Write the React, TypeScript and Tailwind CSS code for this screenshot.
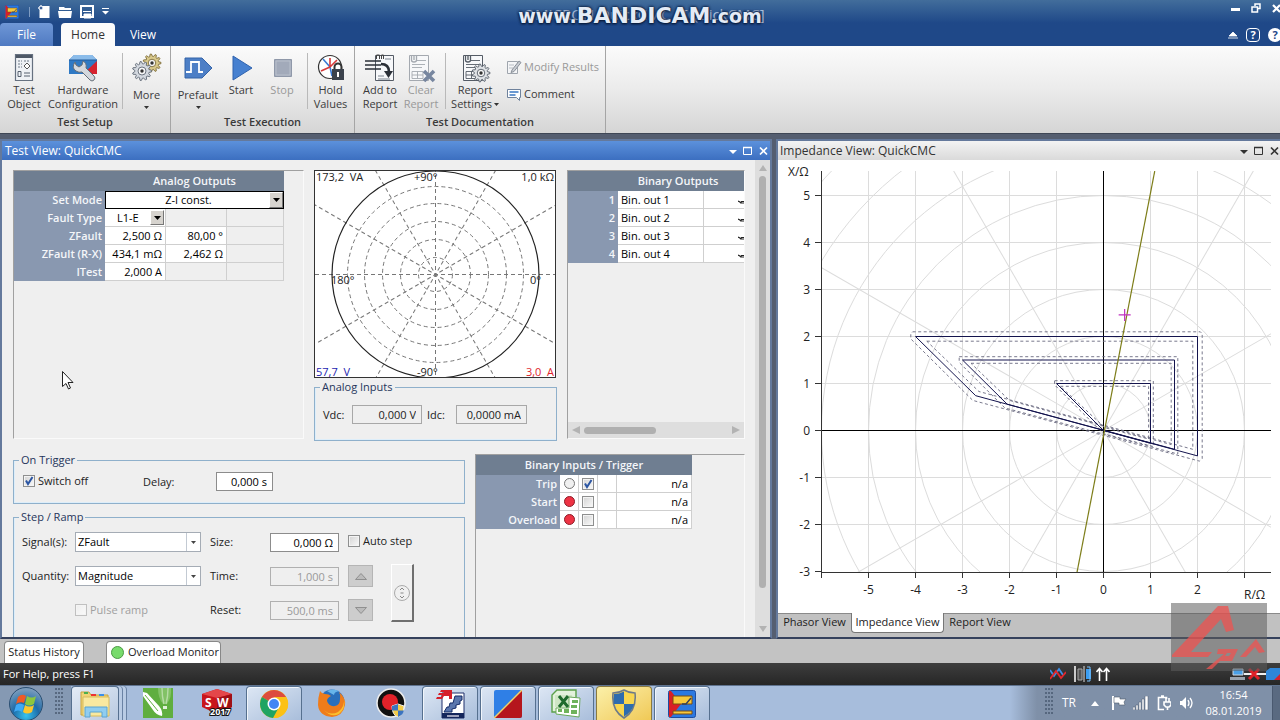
import React from 'react';

const BASE_FONT = "font-['Open_Sans','Noto_Sans',sans-serif]";

/* ---------- Small controls ---------- */

interface CheckProps {
    id: string;
    checked?: boolean;
    disabled?: boolean;
    label?: string;
    ariaLabel?: string;
}

const Check: React.FC<CheckProps> = ({ id, checked = false, disabled = false, label, ariaLabel }) => (
    <span className="inline-flex items-center gap-[3px]">
        <span className="relative inline-flex h-3 w-3">
            <input
                id={id}
                type="checkbox"
                defaultChecked={checked}
                disabled={disabled}
                aria-label={ariaLabel}
                className="peer h-3 w-3 appearance-none border border-[#8e8f8f] bg-gradient-to-br from-[#d3d3d3] to-[#fafafa] shadow-[inset_0_0_0_1px_#f4f4f4] disabled:border-[#c0c0c0] disabled:from-[#eeeeee]"
            />
            <svg viewBox="0 0 12 12" className="pointer-events-none absolute inset-0 hidden h-3 w-3 peer-checked:block" fill="none" stroke="#2c56a3" strokeWidth="2">
                <path d="M3 5.5 L5 9 L9.5 2" />
            </svg>
        </span>
        {label && (
            <label htmlFor={id} className={disabled ? 'text-[#a0a0a0]' : 'text-[#222]'}>
                {label}
            </label>
        )}
    </span>
);

interface ComboProps {
    id: string;
    value: string;
}

const Combo: React.FC<ComboProps> = ({ id, value }) => (
    <span className="relative block h-5 w-[126px]">
        <select id={id} className="h-5 w-full appearance-none border border-[#a5acb5] bg-white px-0.5 text-[11px] leading-4 text-black">
            <option>{value}</option>
        </select>
        <span className="pointer-events-none absolute inset-y-px right-px flex w-[14px] items-center justify-center border-l border-[#c3cad3]">
            <svg width="5" height="3" viewBox="0 0 5 3"><path d="M0 0h5L2.5 3z" fill="#444" /></svg>
        </span>
    </span>
);

const DropArrow: React.FC = () => (
    <span className="pointer-events-none absolute right-px top-px bottom-px flex w-[14px] items-center justify-center border border-[#777] border-t-white border-l-white bg-[#d6d3ce]">
        <svg width="7" height="4" viewBox="0 0 7 4"><path d="M0 0h7L3.5 4z" fill="#000" /></svg>
    </span>
);

interface FieldProps {
    label: string;
    value: string;
    className: string;
    disabled?: boolean;
    readOnly?: boolean;
}

const Field: React.FC<FieldProps> = ({ label, value, className, disabled, readOnly }) => (
    <input
        type="text"
        aria-label={label}
        defaultValue={value}
        disabled={disabled}
        readOnly={readOnly}
        className={`h-[19px] border px-[5px] text-right text-[11px] leading-4 disabled:border-[#b0b0b0] disabled:bg-[#efefef] disabled:text-[#9a9a9a] ${className}`}
    />
);

const WindowButtons: React.FC<{ color: string }> = ({ color }) => (
    <div className="flex items-center gap-1.5">
        <button type="button" aria-label="Window options" className="flex h-3 w-2 items-center">
            <svg width="8" height="10" viewBox="0 0 8 10"><path d="M0 4h8L4 8z" fill={color} /></svg>
        </button>
        <button type="button" aria-label="Maximize" className="flex h-3 w-2.5 items-center">
            <svg width="10" height="10" viewBox="0 0 10 10"><path d="M.5 1.500h8v7h-8z" fill="none" stroke={color} /><path d="M0 1.500h9" stroke={color} strokeWidth="1.500" /></svg>
        </button>
        <button type="button" aria-label="Close" className="flex h-3 w-2.5 items-center">
            <svg width="9" height="10" viewBox="0 0 9 10"><path d="M1 1.500l7 7M8 1.500l-7 7" stroke={color} strokeWidth="1.700" /></svg>
        </button>
    </div>
);

/* ---------- Ribbon icons ---------- */

const gearPath = (cx: number, cy: number, outer: number, inner: number, teeth: number) => {
    const points: string[] = [];
    for (let i = 0; i < teeth * 4; i++) {
        const r = i % 4 < 2 ? outer : inner;
        const a = ((i - 0.5) / (teeth * 4)) * Math.PI * 2;
        points.push(`${(cx + r * Math.cos(a)).toFixed(1)},${(cy + r * Math.sin(a)).toFixed(1)}`);
    }
    return points.join(' ');
};

const Gear: React.FC<{ cx: number; cy: number; r: number; fill: string; stroke: string }> = ({ cx, cy, r, fill, stroke }) => (
    <g>
        <polygon points={gearPath(cx, cy, r, r - 2.4, 11)} fill={fill} stroke={stroke} strokeWidth="0.9" />
        <circle cx={cx} cy={cy} r={r * 0.42} fill="#f6f6f6" stroke={stroke} strokeWidth="0.9" />
        <circle cx={cx} cy={cy} r="1.7" fill="#333" />
    </g>
);

const SheetShape: React.FC<{ faded?: boolean }> = ({ faded }) => {
    const stroke = faded ? '#a4a9b0' : '#555c66';
    return (
        <g fill="none" stroke={stroke}>
            <path d="M4.500 2.500h19v25h-19z" fill="#f7f8fa" />
            <path d="M12 7.500h9M7 11.500h13M7 14.500h10M7 18.500h11v7H7zM12.500 18.500v7M7 22h11" strokeWidth="0.900" />
            <path d="M6.500 2v5q0 2 2.500 2t2.500-2V2M9 2v5" strokeWidth="1.300" />
        </g>
    );
};

const TestObjectIcon = () => (
    <svg width="28" height="30" viewBox="0 0 28 30">
        <path d="M5.500 1.500h17v26h-17z" fill="#eef1f5" stroke="#667180" strokeWidth="1.200" />
        <path d="M6 2h16v3H6z" fill="#4e5866" />
        <path d="M8 8h4M8 11h4M8 14h4M14 8h6" stroke="#6f7a88" strokeDasharray="2 1" />
        <path d="M17 10l3 3-3 3-3-3z" fill="#fff" stroke="#555" />
        <path d="M8 18.500h3v5H8zM14 20h6M14 23h6" fill="none" stroke="#56606e" />
    </svg>
);

const HardwareIcon = () => (
    <svg width="30" height="30" viewBox="0 0 30 30">
        <path d="M1 7l5-5h18l5 5v14H1z" fill="#2f79c4" />
        <path d="M1 7l5-5h18l5 5z" fill="#8bbcea" />
        <path d="M29 8v13H15z" fill="#d5232f" />
        <path d="M1 7h28" stroke="#235c9b" />
        <path d="M7 9q-4 6 1 9q3 2 6 1l8 8q2 2 4 0t0-4l-8-8q1-5-3-7l-1 4-3 2-3-2z" fill="#d4d8dd" stroke="#666f79" />
    </svg>
);

const MoreIcon = () => (
    <svg width="30" height="30" viewBox="0 0 30 30">
        <Gear cx={20} cy={10} r={9} fill="#d9c98b" stroke="#7d6b35" />
        <Gear cx={10} cy={18} r={9.5} fill="#d3d8df" stroke="#5f6874" />
    </svg>
);

const PrefaultIcon = () => (
    <svg width="30" height="30" viewBox="0 0 30 30">
        <path d="M2 5h17l10 10-10 10H2z" fill="#4d7fc6" stroke="#3564a8" />
        <path d="M3 19h5V9h8v10h4" fill="none" stroke="#fff" strokeWidth="1.800" />
    </svg>
);

const StartIcon = () => (
    <svg width="26" height="30" viewBox="0 0 26 30">
        <path d="M5 3l19 12L5 27z" fill="#4680d0" stroke="#2f62ae" />
    </svg>
);

const StopIcon = () => (
    <svg width="26" height="30" viewBox="0 0 26 30">
        <path d="M5.500 6.500h17v17h-17z" fill="#a2aaba" stroke="#8f98a9" />
        <path d="M7 8h14v14H7z" fill="none" stroke="#b9c0cc" />
    </svg>
);

const HoldIcon = () => (
    <svg width="28" height="30" viewBox="0 0 28 30">
        <circle cx="13" cy="14" r="11.500" fill="#fff" stroke="#333" strokeWidth="1.200" />
        <path d="M13 14L6 6M13 14l2 9" stroke="#3a7bd5" strokeWidth="1.600" />
        <path d="M13 14l7-7M13 14L4 18M13 14V5" stroke="#d63a3a" strokeWidth="1.600" />
        <path d="M17.500 17v-3a3.500 3.500 0 0 1 7 0v3" fill="none" stroke="#333" strokeWidth="2" />
        <path d="M15 16h12v11H15z" fill="#3b424c" />
        <path d="M21 19v5" stroke="#fff" strokeWidth="2" />
    </svg>
);

const AddReportIcon = () => (
    <svg width="30" height="30" viewBox="0 0 30 30">
        <path d="M10.500 2.500h18v25h-18z" fill="#f7f8fa" stroke="#555c66" />
        <path d="M20 6h6M13 23h6M13 26h12" stroke="#7d8590" />
        <path d="M11.500 6V2h3v4M16.500 6V2h2v4" fill="none" stroke="#444" />
        <path d="M0 8h16M0 12h16M0 16h16" stroke="#2b3038" strokeWidth="1.600" />
        <path d="M16 11q8 0 8 8" fill="none" stroke="#2b3038" strokeWidth="2.600" />
        <path d="M19 18h9l-4.500 7z" fill="#2b3038" />
    </svg>
);

const ClearReportIcon = () => (
    <svg width="32" height="30" viewBox="0 0 32 30">
        <SheetShape faded />
        <path d="M19 18l10 10M29 18L19 28" stroke="#77869f" strokeWidth="3.600" />
    </svg>
);

const ReportSettingsIcon = () => (
    <svg width="32" height="30" viewBox="0 0 32 30">
        <SheetShape />
        <Gear cx={22} cy={20} r={9} fill="#dfe2e6" stroke="#545b66" />
    </svg>
);

const ModifyIcon = () => (
    <svg width="16" height="16" viewBox="0 0 16 16">
        <path d="M1.500 2.500h10v12h-10z" fill="#f4f5f7" stroke="#9fa5ad" />
        <path d="M3 6h5M3 9h4" stroke="#b7bcc3" />
        <path d="M6 11l7-9 2 1.500-7 9-3 1z" fill="#c9cdd3" stroke="#8a9099" />
    </svg>
);

const CommentIcon = () => (
    <svg width="16" height="16" viewBox="0 0 16 16">
        <path d="M1.500 3.500h13v8h-1v3l-3-3h-9z" fill="#fff" stroke="#6f829c" />
        <path d="M3.500 6h9M3.500 9h6" stroke="#3b78c2" strokeWidth="1.400" />
    </svg>
);

interface RibbonButtonProps {
    icon: React.ReactNode;
    lines: string[];
    width: string;
    disabled?: boolean;
    menu?: boolean;
}

const MenuTriangle = () => (
    <svg width="5" height="3" viewBox="0 0 5 3"><path d="M0 0h5L2.500 3z" fill="#333" /></svg>
);

const RibbonButton: React.FC<RibbonButtonProps> = ({ icon, lines, width, disabled, menu }) => (
    <button
        type="button"
        disabled={disabled}
        className={`flex shrink-0 flex-col items-center whitespace-nowrap text-[#3b3b3b] disabled:text-[#999] ${width}`}
    >
        {icon}
        <span className={menu && lines.length === 1 ? 'mt-[5px] leading-[14px]' : 'leading-[14px]'}>{lines[0]}</span>
        {lines[1] && (
            <span className="flex items-center gap-0.5 leading-[14px]">
                {lines[1]}
                {menu && <MenuTriangle />}
            </span>
        )}
        {menu && lines.length === 1 && <span className="mt-1"><MenuTriangle /></span>}
    </button>
);

const InnerRule = () => <span className="h-14 w-px shrink-0 bg-[#b9b9b9]" />;

const RibbonGroup: React.FC<{ title: string; width: string; children: React.ReactNode }> = ({ title, width, children }) => (
    <section className={`flex shrink-0 flex-col border-r border-[#a5a5a5] pt-[7px] ${width}`}>
        <div className="flex h-[61px] items-start">{children}</div>
        <h2 className="text-center font-semibold leading-4 text-[#3a3a3a]">{title}</h2>
    </section>
);

const Ribbon: React.FC = () => (
    <div className="flex h-[87px] shrink-0 bg-gradient-to-b from-[#fbfbfb] via-[#ebebeb] to-[#d5d5d5] text-[11px]">
        <RibbonGroup title="Test Setup" width="w-[171px]">
            <RibbonButton icon={<TestObjectIcon />} lines={['Test', 'Object']} width="w-12" />
            <RibbonButton icon={<HardwareIcon />} lines={['Hardware', 'Configuration']} width="w-[70px]" />
            <span className="w-1" />
            <InnerRule />
            <RibbonButton icon={<MoreIcon />} lines={['More']} width="w-[47px]" menu />
        </RibbonGroup>
        <RibbonGroup title="Test Execution" width="w-[184px]">
            <RibbonButton icon={<PrefaultIcon />} lines={['Prefault']} width="w-[54px]" menu />
            <RibbonButton icon={<StartIcon />} lines={['Start']} width="w-8" />
            <RibbonButton icon={<StopIcon />} lines={['Stop']} width="w-[50px]" disabled />
            <InnerRule />
            <RibbonButton icon={<HoldIcon />} lines={['Hold', 'Values']} width="w-[45px]" />
        </RibbonGroup>
        <RibbonGroup title="Test Documentation" width="w-[251px]">
            <RibbonButton icon={<AddReportIcon />} lines={['Add to', 'Report']} width="w-[50px]" />
            <RibbonButton icon={<ClearReportIcon />} lines={['Clear', 'Report']} width="w-8" disabled />
            <span className="w-2" />
            <InnerRule />
            <RibbonButton icon={<ReportSettingsIcon />} lines={['Report', 'Settings']} width="w-[58px]" menu />
            <div className="flex flex-col items-start gap-[11px] pl-0.5 pt-1.5">
                <button type="button" disabled className="flex items-center gap-0.5 whitespace-nowrap leading-4 text-[#999]">
                    <ModifyIcon />
                    Modify Results
                </button>
                <button type="button" className="flex items-center gap-0.5 whitespace-nowrap leading-4 text-[#3b3b3b]">
                    <CommentIcon />
                    Comment
                </button>
            </div>
        </RibbonGroup>
    </div>
);

/* ---------- Window header ---------- */

const AppLogo: React.FC<{ size: number }> = ({ size }) => (
    <svg width={size} height={size} viewBox="0 0 28 28">
        <rect x="0.500" y="0.500" width="27" height="27" rx="2" fill="#2b78e0" stroke="#1c4da0" />
        <path d="M1 1h2l10 13-10 13H1z" fill="#d91f26" />
        <path d="M5 6h19v8H5zM5 21h19v3H5z" fill="#f7c83c" stroke="#7a4c10" />
        <path d="M14 14h4l5-6" fill="none" stroke="#33405a" strokeWidth="1.500" />
    </svg>
);

const Header: React.FC = () => (
    <header className="relative flex h-[46px] shrink-0 flex-col justify-between bg-gradient-to-b from-[#426d9b] via-[#1f4888] to-[#1f4888] text-white">
        <div className="flex h-[23px] items-center">
            <div className="flex items-center gap-2 pl-[5px]">
                <AppLogo size={14} />
                <span className="ml-0.5 h-2.5 w-px bg-[#7f9cc2]" />
                <button type="button" aria-label="New">
                    <svg width="12" height="14" viewBox="0 0 12 14"><path d="M3 1h8.500v12h-10V5z" fill="#fff" /><path d="M3 0v6M0 3h6" stroke="#fff" /><circle cx="3" cy="3" r="2" fill="#3f639b" stroke="#fff" /></svg>
                </button>
                <button type="button" aria-label="Open">
                    <svg width="14" height="14" viewBox="0 0 14 14"><path d="M1 2h5l1 1h6v2H1zM0 6h14l-1 7H1z" fill="#fff" /></svg>
                </button>
                <button type="button" aria-label="Save">
                    <svg width="14" height="14" viewBox="0 0 14 14"><path d="M1 1h12v11H1z" fill="none" stroke="#fff" strokeWidth="2" /><path d="M3 6.500h8M4 9h7v4H4z" fill="#fff" stroke="#fff" /></svg>
                </button>
                <button type="button" aria-label="Customize toolbar">
                    <svg width="7" height="7" viewBox="0 0 7 7"><path d="M0 0h7v1H0zM0 3h7L3.500 6.500z" fill="#fff" /></svg>
                </button>
            </div>
            <div className="ml-auto flex items-center gap-[11px] self-start pt-[3px]">
                <button type="button" aria-label="Minimize window">
                    <svg width="9" height="9" viewBox="0 0 9 9"><path d="M0 4h9v3H0z" fill="#fff" /></svg>
                </button>
                <button type="button" aria-label="Restore window">
                    <svg width="10" height="10" viewBox="0 0 10 10"><path d="M4 3V1h5v4.500H7M1 4h5.500v5H1z" fill="none" stroke="#fff" strokeWidth="1.500" /></svg>
                </button>
                <button type="button" aria-label="Close window" className="-mr-0.5">
                    <svg width="10" height="9" viewBox="0 0 10 9"><path d="M1 1l7 7M8 1L1 8" stroke="#fff" strokeWidth="2.200" /></svg>
                </button>
            </div>
        </div>
        <nav className="flex h-[23px] items-stretch text-[12px]">
            <button type="button" className="w-[53px] rounded-t bg-gradient-to-b from-[#6f97d6] to-[#4f7ac2]">File</button>
            <button type="button" className="ml-2 w-[54px] rounded-t bg-[#fbfbfb] text-[#333]">Home</button>
            <button type="button" className="w-14">View</button>
            <div className="ml-auto flex items-center gap-2">
                <button type="button" aria-label="Collapse ribbon">
                    <svg width="10" height="8" viewBox="0 0 10 8"><path d="M1 5l4-4 4 4zM0 7h10" fill="#fff" stroke="#fff" strokeWidth="0.800" /></svg>
                </button>
                <button type="button" aria-label="Context help" className="h-3.5 w-3.5 rounded-sm border border-white text-[11px] font-bold leading-3">?</button>
                <button type="button" aria-label="Help" className="-mr-0.5 h-3.5 w-3.5 rounded-full bg-white text-[11px] font-bold leading-3 text-[#1f4888]">?</button>
            </div>
        </nav>
        <div className="pointer-events-none absolute inset-x-0 top-0 flex h-7 items-center justify-center pl-2 text-[15px] text-[#a9bdd8]">
            OMICRON QuickCMC - [QuickCMC]
        </div>
        <div className="pointer-events-none absolute inset-x-0 top-0 flex h-8 items-center justify-center font-['DejaVu_Sans',sans-serif] text-[19px] font-bold text-[#e4ebf5] [text-shadow:0_0_3px_#0b1d3d,0_0_3px_#0b1d3d,0_1px_2px_#0b1d3d]">
            www.<span className="text-[22px] leading-none">BANDICAM</span>.com
        </div>
    </header>
);

/* ---------- Test view ---------- */

const headCell = 'h-5 bg-[#6f7e91] p-0 text-center font-semibold text-[#f4f6f9]';
const rowHead = 'h-[18px] bg-[#8998b0] p-0 pr-[3px] text-right font-semibold text-[#f4f6f9]';
const valueCell = 'h-[18px] border-r border-b border-[#cfcfcf] bg-white p-0 pr-[3px] text-right text-black';
const emptyCell = 'h-[18px] border-r border-b border-[#cfcfcf] bg-[#efefef] p-0';

const analogRows = [
    { name: 'ZFault', cells: ['2,500 Ω', '80,00 °', ''] },
    { name: 'ZFault (R-X)', cells: ['434,1 mΩ', '2,462 Ω', ''] },
    { name: 'ITest', cells: ['2,000 A', '', ''] },
];

const AnalogOutputs: React.FC = () => (
    <table className="w-[270px] table-fixed border-separate border-spacing-0 text-[11px] leading-4">
        <colgroup>
            <col className="w-[91px]" />
            <col className="w-[61px]" />
            <col className="w-[61px]" />
            <col className="w-[57px]" />
        </colgroup>
        <thead>
            <tr>
                <th className={headCell} />
                <th className={headCell} colSpan={3}>Analog Outputs</th>
            </tr>
        </thead>
        <tbody>
            <tr>
                <th scope="row" className={rowHead}>Set Mode</th>
                <td colSpan={3} className="h-[18px] p-0">
                    <span className="relative block h-[18px]">
                        <select aria-label="Set Mode" className="block h-[18px] w-full appearance-none border border-black bg-white pr-3 text-center leading-4 text-black">
                            <option>Z-I const.</option>
                        </select>
                        <DropArrow />
                    </span>
                </td>
            </tr>
            <tr>
                <th scope="row" className={rowHead}>Fault Type</th>
                <td className="h-[18px] border-r border-b border-[#cfcfcf] bg-white p-0">
                    <span className="relative block h-[17px]">
                        <select aria-label="Fault Type" className="block h-[17px] w-full appearance-none bg-white pl-3 leading-4 text-black">
                            <option>L1-E</option>
                        </select>
                        <DropArrow />
                    </span>
                </td>
                <td className={emptyCell} />
                <td className={emptyCell} />
            </tr>
            {analogRows.map((row) => (
                <tr key={row.name}>
                    <th scope="row" className={rowHead}>{row.name}</th>
                    {row.cells.map((cell, i) => (
                        <td key={i} className={cell ? valueCell : emptyCell}>{cell}</td>
                    ))}
                </tr>
            ))}
        </tbody>
    </table>
);

const BinaryOutputs: React.FC = () => (
    <table className="w-full table-fixed border-separate border-spacing-0 text-[11px] leading-4">
        <colgroup>
            <col className="w-[50px]" />
            <col className="w-[86px]" />
            <col />
        </colgroup>
        <thead>
            <tr>
                <th className={headCell} />
                <th className={`${headCell} pr-1.5`} colSpan={2}>Binary Outputs</th>
            </tr>
        </thead>
        <tbody>
            {[1, 2, 3, 4].map((n) => (
                <tr key={n}>
                    <th scope="row" className={rowHead}>{n}</th>
                    <td className="h-[18px] border-r border-b border-[#cfcfcf] bg-white p-0 pl-[3px] text-left text-black">Bin. out {n}</td>
                    <td className="h-[18px] border-b border-[#cfcfcf] bg-white p-0">
                        <svg className="ml-auto mt-1" width="6" height="6" viewBox="0 0 6 6"><path d="M0 2l2 1M2 4l1.500-1.500H6M2 4h4" fill="none" stroke="#222" strokeWidth="1.200" /></svg>
                    </td>
                </tr>
            ))}
        </tbody>
    </table>
);

const triggerInputs = [
    { name: 'Trip', active: false, checked: true },
    { name: 'Start', active: true, checked: false },
    { name: 'Overload', active: true, checked: false },
];

const BinaryInputs: React.FC = () => (
    <table className="w-[216px] table-fixed border-separate border-spacing-0 text-[11px] leading-4">
        <colgroup>
            <col className="w-[84px]" />
            <col className="w-[19px]" />
            <col className="w-[19px]" />
            <col className="w-[19px]" />
            <col className="w-[75px]" />
        </colgroup>
        <thead>
            <tr>
                <th className={headCell} colSpan={5}>Binary Inputs / Trigger</th>
            </tr>
        </thead>
        <tbody>
            {triggerInputs.map((input) => (
                <tr key={input.name}>
                    <th scope="row" className={rowHead}>{input.name}</th>
                    <td className="h-[18px] border-r border-b border-[#cfcfcf] bg-white p-0">
                        <span className={`mx-auto block h-[11px] w-[11px] rounded-full border ${input.active ? 'border-[#8c1c27] bg-[#ee3344]' : 'border-[#777] bg-[#f0f0f0]'}`} />
                    </td>
                    <td className="h-[18px] border-r border-b border-[#cfcfcf] bg-white p-0">
                        <span className="flex justify-center">
                            <Check id={`input-${input.name}`} checked={input.checked} ariaLabel={`Use ${input.name}`} />
                        </span>
                    </td>
                    <td className={valueCell} />
                    <td className={valueCell}>n/a</td>
                </tr>
            ))}
        </tbody>
    </table>
);

const PolarPlot: React.FC = () => (
    <svg width="242" height="208" viewBox="0 0 242 208" className="block bg-white" fontSize="11">
        <g stroke="#777" fill="none" strokeDasharray="4 3">
            {[17, 35, 53, 71, 88].map((r) => <circle key={r} cx="121.500" cy="104.500" r={r} />)}
            {[0, 30, 60, 90, 120, 150].map((deg) => (
                <path key={deg} d="M-20 104.500H260" transform={`rotate(${deg} 121.5 104.5)`} />
            ))}
        </g>
        <circle cx="121.500" cy="104.500" r="103.500" fill="none" stroke="#222" strokeWidth="1.200" />
        <rect x="0.500" y="0.500" width="241" height="207" fill="none" stroke="#333" />
        <g fill="#222">
            <text x="2" y="11">173,2&#160; VA</text>
            <text x="240" y="11" textAnchor="end">1,0 kΩ</text>
            <text x="100" y="11">+90°</text>
            <text x="17" y="114">180°</text>
            <text x="216" y="114">0°</text>
            <text x="103" y="206">-90°</text>
        </g>
        <text x="2" y="206" fill="#1c1cb0">57,7&#160; V</text>
        <text x="240" y="206" textAnchor="end" fill="#e0242c">3,0&#160; A</text>
    </svg>
);

const fieldsetClass = 'min-w-0 border border-[#8fb0cb] shadow-[inset_1px_-1px_0_#ddeefa]';
const legendClass = 'ml-[5px] px-0.5 leading-3 text-[#26365c]';

const AnalogInputs: React.FC = () => (
    <fieldset className={`mt-[3px] h-[60px] ${fieldsetClass}`}>
        <legend className={legendClass}>Analog Inputs</legend>
        <div className="flex items-center pl-2 pt-3">
            <span className="w-[29px]">Vdc:</span>
            <Field label="Vdc" value="0,000 V" readOnly className="w-[70px] border-[#a8a8a8] bg-[#efefef]" />
            <span className="ml-[5px] w-[29px]">Idc:</span>
            <Field label="Idc" value="0,0000 mA" readOnly className="w-[71px] border-[#a8a8a8] bg-[#efefef]" />
        </div>
    </fieldset>
);

const OnTrigger: React.FC = () => (
    <fieldset className={`h-[50px] shrink-0 ${fieldsetClass}`}>
        <legend className={legendClass}>On Trigger</legend>
        <div className="flex items-center pl-[9px] pt-1.5">
            <span className="w-[120px]"><Check id="switch-off" checked label="Switch off" /></span>
            <label htmlFor="delay" className="w-[73px]">Delay:</label>
            <input id="delay" type="text" defaultValue="0,000 s" className="h-[19px] w-[57px] border border-[#8c8c8c] bg-white px-[5px] text-right leading-4 text-black" />
        </div>
    </fieldset>
);

const StepRamp: React.FC = () => (
    <fieldset className={`mt-[7px] min-h-[140px] flex-1 ${fieldsetClass}`}>
        <legend className={legendClass}>Step / Ramp</legend>
        <div className="grid grid-cols-[53px_135px_60px_78px_43px_23px] grid-rows-[34px_34px_34px] items-center pl-2 pt-0.5">
            <label htmlFor="signals">Signal(s):</label>
            <Combo id="signals" value="ZFault" />
            <span>Size:</span>
            <Field label="Size" value="0,000 Ω" className="w-[69px] border-[#8c8c8c] bg-white text-black" />
            <span className="col-span-2 whitespace-nowrap"><Check id="auto-step" label="Auto step" /></span>

            <label htmlFor="quantity">Quantity:</label>
            <Combo id="quantity" value="Magnitude" />
            <span>Time:</span>
            <Field label="Time" value="1,000 s" disabled className="w-[69px]" />
            <button type="button" disabled aria-label="Step up" className="flex h-[22px] w-[25px] items-center justify-center border border-[#b5b5b5] bg-[#cdcdcd]">
                <svg width="12" height="7" viewBox="0 0 12 7"><path d="M6 .5L11.500 6.500H.5z" fill="#bbb" stroke="#8f8f8f" /></svg>
            </button>
            <button type="button" aria-label="Wheel" className="row-span-2 flex h-[58px] w-[23px] items-center justify-center border-r-2 border-b-2 border-l border-t border-[#fff] border-r-[#6f6f6f] border-b-[#6f6f6f] bg-[#f0f0f0]">
                <svg width="16" height="16" viewBox="0 0 16 16" fill="none" stroke="#aaa">
                    <circle cx="8" cy="8" r="7.500" />
                    <path d="M6 5l2-2 2 2M6 11l2 2 2-2M6.500 8h3" stroke="#888" />
                </svg>
            </button>

            <span />
            <Check id="pulse-ramp" disabled label="Pulse ramp" />
            <span>Reset:</span>
            <Field label="Reset" value="500,0 ms" disabled className="w-[69px]" />
            <button type="button" disabled aria-label="Step down" className="flex h-[22px] w-[25px] items-center justify-center border border-[#b5b5b5] bg-[#cdcdcd]">
                <svg width="12" height="7" viewBox="0 0 12 7"><path d="M6 6.500L11.500 .5H.5z" fill="#bbb" stroke="#8f8f8f" /></svg>
            </button>
        </div>
    </fieldset>
);

const VerticalScrollbar: React.FC = () => (
    <div className="flex w-[15px] shrink-0 flex-col items-center bg-[#dedede] py-[5px]">
        <svg width="8" height="6" viewBox="0 0 8 6" className="shrink-0"><path d="M4 0l4 6H0z" fill="#b3b3b3" /></svg>
        <div className="mt-[5px] w-[7px] grow-[411] rounded-full bg-[#b0b0b0]" />
        <div className="grow-[38]" />
        <svg width="8" height="6" viewBox="0 0 8 6" className="shrink-0"><path d="M0 0h8L4 6z" fill="#b3b3b3" /></svg>
    </div>
);

const sunken = 'border border-t-[#a0a0a0] border-l-[#a0a0a0] border-r-[#fafafa] border-b-[#fafafa]';

const TestView: React.FC = () => (
    <section className="flex min-h-0 min-w-0 flex-col border-2 border-[#64799c] border-b-[#35415c]">
        <div className="flex h-[19px] shrink-0 items-center justify-between bg-gradient-to-b from-[#5c91dc] to-[#3c6fc0] pl-[3px] pr-px text-[12px] text-white">
            <h1>Test View: QuickCMC</h1>
            <WindowButtons color="#fff" />
        </div>
        <div className="flex min-h-0 flex-1 bg-[#efefef]">
            <div className="flex min-w-0 flex-1 flex-col overflow-hidden pl-[11px] pr-2.5 pt-2.5 text-[11px] leading-4 text-[#222]">
                <div className="flex shrink-0 gap-2.5">
                    <div className={`mb-0.5 w-[291px] shrink-0 ${sunken}`}>
                        <AnalogOutputs />
                    </div>
                    <div className="w-[243px] shrink-0">
                        <PolarPlot />
                        <AnalogInputs />
                    </div>
                    <div className={`mb-0.5 flex min-w-0 flex-1 flex-col justify-between ${sunken}`}>
                        <BinaryOutputs />
                        <div className="flex h-4 items-center justify-between bg-[#dedede] px-1">
                            <svg width="8" height="8" viewBox="0 0 8 8"><path d="M8 0v8L0 4z" fill="#b3b3b3" /></svg>
                            <div className="mr-auto ml-1 h-[7px] w-[72px] rounded-full bg-[#b0b0b0]" />
                            <svg width="8" height="8" viewBox="0 0 8 8"><path d="M0 0l8 4-8 4z" fill="#b3b3b3" /></svg>
                        </div>
                    </div>
                </div>
                <div className="mt-[13px] flex min-h-0 flex-1 gap-2.5">
                    <div className="flex w-[452px] shrink-0 flex-col">
                        <OnTrigger />
                        <StepRamp />
                    </div>
                    <div className={`min-w-0 flex-1 border-b-0 ${sunken}`}>
                        <BinaryInputs />
                    </div>
                </div>
            </div>
            <VerticalScrollbar />
        </div>
    </section>
);

/* ---------- Impedance view ---------- */

const UNIT = 47;
const X0 = 325;
const Y0 = 270;

const px = (r: number) => X0 + r * UNIT + 0.5;
const py = (x: number) => Y0 - x * UNIT + 0.5;
const poly = (pts: number[][]) => pts.map(([r, x]) => `${px(r).toFixed(1)},${py(x).toFixed(1)}`).join(' ');

const zones = [
    [[-1, 1], [1, 1], [1, -0.27], [0, 0]],
    [[-3, 1.5], [1.51, 1.5], [1.51, -0.4], [-2.05, 0.56]],
    [[-4, 2], [2, 2], [2, -0.54], [-2.72, 0.74]],
];

// Upper and lower tolerance band of every zone
const tolerances = [
    [[-1.04, 1.06], [1.06, 1.06], [1.06, -0.34], [0, -0.07], [-1.04, 0.97]],
    [[-0.92, 0.94], [0.96, 0.94], [0.96, -0.18], [0.03, 0.06]],
    [[-3.07, 1.57], [1.58, 1.57], [1.58, -0.5], [-2.1, 0.48], [-3.07, 1.45]],
    [[-2.82, 1.43], [1.44, 1.43], [1.44, -0.3], [-2, 0.64]],
    [[-4.06, 2.1], [2.06, 2.1], [2.1, 2.06], [2.1, -0.6], [2.04, -0.65], [-2.78, 0.64], [-4.1, 1.95], [-4.1, 2.06]],
    [[-3.76, 1.9], [1.9, 1.9], [1.9, -0.4], [-2.65, 0.83]],
];

const ImpedancePlot: React.FC = () => (
    <svg width="502" height="453" viewBox="0 0 502 453" className="block shrink-0" fontSize="12">
        <defs>
            <clipPath id="plot-area"><rect x="43" y="11" width="450" height="402" /></clipPath>
        </defs>
        <g clipPath="url(#plot-area)" fill="none">
            <g stroke="#dcdcdc">
                {[-5, -4, -3, -2, -1, 1, 2, 3].map((r) => <path key={r} d={`M${px(r)} 0V413`} />)}
                {[-2, -1, 1, 2, 3, 4, 5].map((x) => <path key={x} d={`M43 ${py(x)}H493`} />)}
                {[1, 2, 3, 4, 5, 6, 7, 8].map((n) => <circle key={n} cx={px(0)} cy={py(0)} r={n * UNIT} />)}
                {[30, 60, 120, 150].map((deg) => (
                    <path key={deg} d={`M-200 ${py(0)}H850`} transform={`rotate(${deg} ${px(0)} ${py(0)})`} />
                ))}
            </g>
            <path d={`M43 ${py(0)}H493M${px(0)} 11V413`} stroke="#000" />
            <g stroke="#6a6a80" strokeWidth="0.900" strokeDasharray="3 2.500">
                {tolerances.map((pts, i) => <polygon key={i} points={poly(pts)} />)}
            </g>
            <g stroke="#14144e">
                {zones.map((pts, i) => <polygon key={i} points={poly(pts)} />)}
            </g>
            <path d={`M${px(-0.57)} ${py(-3.05)}L${px(1.09)} ${py(5.52)}`} stroke="#7d7d18" strokeWidth="1.200" />
            <path d={`M${px(0.45) - 6} ${py(2.46)}h12M${px(0.45)} ${py(2.46) - 6}v12`} stroke="#c030c0" strokeWidth="1.200" />
        </g>
        <path d="M43.500 11V412.500M43 412.500H493" stroke="#333" fill="none" />
        <g stroke="#333">
            {[-3, -2, -1, 0, 1, 2, 3, 4, 5].map((x) => <path key={x} d={`M37 ${py(x)}H43`} />)}
            {[-6, -5, -4, -3, -2, -1, 0, 1, 2, 3].map((r) => <path key={r} d={`M${px(r)} 412V418`} />)}
        </g>
        <g fill="#222">
            {[-3, -2, -1, 0, 1, 2, 3, 4, 5].map((x) => (
                <text key={x} x="32" y={py(x) + 4} textAnchor="end">{x}</text>
            ))}
            {[-5, -4, -3, -2, -1, 0, 1, 2].map((r) => (
                <text key={r} x={px(r)} y="434" textAnchor="middle">{r}</text>
            ))}
            <text x="10" y="16">X/Ω</text>
            <text x="466" y="439">R/Ω</text>
        </g>
    </svg>
);

const ImpedanceView: React.FC = () => (
    <section className="flex min-h-0 min-w-0 flex-col overflow-hidden border-y-2 border-l-2 border-[#64799c] border-b-[#35415c] bg-white">
        <div className="flex h-[19px] shrink-0 items-center justify-between bg-gradient-to-b from-[#f3f3f3] to-[#dadada] pl-0.5 text-[12px] text-[#333]">
            <h1>Impedance View: QuickCMC</h1>
            <WindowButtons color="#333" />
        </div>
        <div className="min-h-0 flex-1 overflow-hidden"><ImpedancePlot /></div>
        <div className="flex h-6 shrink-0 items-start border-t border-[#8a8a8a] bg-[#c1c1c1] text-[11px] text-[#222]">
            <button type="button" className="h-4 w-[73px] whitespace-nowrap">Phasor View</button>
            <button type="button" className="-mt-px h-5 w-[93px] whitespace-nowrap rounded-b border border-t-0 border-[#777] bg-white">Impedance View</button>
            <button type="button" className="h-4 w-[72px] whitespace-nowrap">Report View</button>
        </div>
    </section>
);

/* ---------- Bottom bars ---------- */

const BottomTabs: React.FC = () => (
    <div className="flex h-6 shrink-0 items-end bg-[#c3c3c3] pl-1 text-[11px] text-[#222]">
        <button type="button" className="h-[22px] w-20 rounded-t border border-b-0 border-[#888] bg-white">Status History</button>
        <button type="button" className="ml-[22px] flex h-[22px] w-[115px] items-center gap-1 whitespace-nowrap rounded-t border border-b-0 border-[#888] bg-white pl-1">
            <span className="h-[13px] w-[13px] shrink-0 rounded-full border border-[#4a9a44] bg-[#78db6c]" />
            Overload Monitor
        </button>
    </div>
);

const StatusBar: React.FC = () => (
    <div className="flex h-[22px] shrink-0 items-center justify-between overflow-hidden bg-gradient-to-b from-[#3e3e3e] to-[#262626] pl-[3px] text-[11px] text-white">
        <span>For Help, press F1</span>
        <div className="flex shrink-0 items-center">
            <svg width="16" height="14" viewBox="0 0 16 14" fill="none" strokeWidth="1.800"><path d="M0 3l4 6 5-7 4 6" stroke="#3b8fe8" /><path d="M0 12l6-8 5 7 5-6" stroke="#e3262e" /></svg>
            <svg className="ml-2" width="18" height="16" viewBox="0 0 18 16"><path d="M1 0v16" stroke="#fff" strokeWidth="1.500" /><path d="M4 3h4v11H4z" fill="#555" stroke="#aaa" /><path d="M10 0v16" stroke="#ddd" /><path d="M12 3h5v10h-5z" fill="#3c9ef2" /><path d="M13 1h3v14h-3" stroke="#7cc0f8" fill="none" /></svg>
            <svg className="ml-1" width="14" height="14" viewBox="0 0 14 14" stroke="#fff" strokeWidth="1.600" fill="none"><path d="M3.500 14V2M.5 5l3-3.500 3 3.500M10.500 14V2M7.500 5l3-3.500 3 3.500" /></svg>
            <svg className="ml-[120px]" width="50" height="14" viewBox="0 0 50 14">
                <path d="M3 2h10v6H3z" fill="#4aa0e6" stroke="#cfd8e2" /><path d="M0 10h15v3H0z" fill="#9aa3ad" />
                <path d="M14 7h22" stroke="#eee" strokeWidth="2" />
                <path d="M19 2l10 10M29 2L19 12" stroke="#e02028" strokeWidth="3" />
                <path d="M36 4l4-3h10v12H36z" fill="#2f86d8" /><path d="M50 7v6h-6z" fill="#d5232f" />
            </svg>
        </div>
    </div>
);

const Grip = () => (
    <svg width="8" height="30" viewBox="0 0 8 30">
        {[0, 4, 8, 12, 16, 20, 24].map((y) => <path key={y} d={`M0 ${y + 1}h8`} stroke="#4a5a70" strokeWidth="1.500" strokeDasharray="2 1" />)}
    </svg>
);

const StartOrb = () => (
    <svg width="36" height="35" viewBox="0 0 36 35">
        <defs>
            <radialGradient id="orb" cx="50%" cy="85%" r="80%"><stop offset="0" stopColor="#35c3f0" /><stop offset="0.500" stopColor="#1e6ba8" /><stop offset="1" stopColor="#7b9cbc" /></radialGradient>
        </defs>
        <circle cx="18" cy="18" r="16.500" fill="url(#orb)" stroke="#2b4f72" />
        <path d="M10 11q4-4 8-1l-2 7q-4-2-8 1z" fill="#ef5a24" />
        <path d="M19 10q5 3 9 0l-2 8q-5 3-9 0z" fill="#8cc63e" />
        <path d="M8 19q4-3 8 0l-2 7q-4-3-8 0z" fill="#3fa9f5" />
        <path d="M17 19q4 3 9 0l-2 7q-5 3-9 0z" fill="#fbc62d" />
    </svg>
);

const ExplorerIcon = () => (
    <svg width="32" height="30" viewBox="0 0 32 30">
        <path d="M2 3h8l2 3h17v20H2z" fill="#f0d476" stroke="#c6a33e" />
        <path d="M4 8h26v19H4z" fill="#f9e9a0" stroke="#d8bb5c" />
        <path d="M5 3h4v2H5z" fill="#4caf50" /><path d="M12 5h5v2h-5z" fill="#e33" /><path d="M20 5h5v2h-5z" fill="#3b8fe8" />
        <path d="M6 28V18h22v10h-5v-5H11v5z" fill="#8fcdf0" stroke="#5aa4d2" />
    </svg>
);

const CorelIcon = () => (
    <svg width="30" height="30" viewBox="0 0 30 30">
        <path d="M0 0h30v30H0z" fill="#5fae3f" />
        <path d="M0 4l4 1 12 13q4 5 3 10-6-1-9-6L0 8z" fill="#fff" />
        <path d="M2 7l13 16" stroke="#5fae3f" />
        <path d="M15 0q0 10 5 16h4q5-7 4-16" fill="#82c266" />
        <path d="M19 0q0 9 2 16M25 0q0 9-2 16" fill="none" stroke="#b6dca5" strokeWidth="1.400" />
        <path d="M20 18h4v3h-4z" fill="#dff0d8" />
    </svg>
);

const SolidWorksIcon = () => (
    <svg width="32" height="30" viewBox="0 0 32 30">
        <path d="M1 6l15-5 15 5v13l-15 7-15-7z" fill="#c8161d" />
        <path d="M1 6l15-5 15 5-15 4z" fill="#e4474a" />
        <path d="M16 10l15-4v13l-15 7z" fill="#9f1016" />
        <text x="4" y="19" fontSize="12" fontWeight="bold" fill="#fff">S</text>
        <text x="16" y="19" fontSize="12" fontWeight="bold" fill="#fff">W</text>
        <text x="9" y="27" fontSize="9" fontWeight="bold" fill="#fff" stroke="#111" strokeWidth="2" paintOrder="stroke">2017</text>
    </svg>
);

const ChromeIcon = () => (
    <svg width="30" height="30" viewBox="0 0 30 30">
        <circle cx="15" cy="15" r="14" fill="#fbc116" />
        <path d="M15 15L2.900 8A14 14 0 0 1 27.100 8z" fill="#dd4b3e" />
        <path d="M15 15L2.900 8A14 14 0 0 0 14 29l6-11z" fill="#1fa463" />
        <path d="M15 8h12.200a14 14 0 0 1-12.500 21L21 18z" fill="#fbc116" />
        <circle cx="15" cy="15" r="6.500" fill="#fff" /><circle cx="15" cy="15" r="5" fill="#4285f4" />
    </svg>
);

const FirefoxIcon = () => (
    <svg width="30" height="30" viewBox="0 0 30 30">
        <circle cx="15" cy="14" r="12.500" fill="#2a6fbb" />
        <path d="M10 3q6-3 12 0-5 1-5 4z" fill="#67b5ea" />
        <path d="M3 3q2 3 5 3 4 0 6 2-4 2-4 5 2 6 8 5 5-1 5-7 1-4-1-7 7 6 6 13-2 11-13 12Q2 28 1 17 1 9 3 3z" fill="#ef7c1b" />
        <path d="M27 10q1 9-6 14-8 4-14-2 7 8 15 4 7-5 5-16z" fill="#fbc02d" />
    </svg>
);

const RecorderIcon = () => (
    <svg width="30" height="30" viewBox="0 0 30 30">
        <circle cx="15" cy="15" r="14" fill="#111" stroke="#eee" strokeWidth="1.500" />
        <circle cx="14" cy="14" r="8" fill="#e2222a" />
        <g transform="translate(16 16)"><path d="M6 0l6 2q0 9-6 11Q0 11 0 2z" fill="#f3cc4a" stroke="#eee" /><path d="M6 0v6.500H0V2zM6 6.500h6Q11 11 6 13z" fill="#3b74c0" /></g>
    </svg>
);

const AutocadIcon = () => (
    <svg width="30" height="30" viewBox="0 0 30 30">
        <path d="M7 4h22v25H7z" fill="#fff" stroke="#1e2f6a" />
        <path d="M7 24h22v5H7z" fill="#14265c" />
        <path d="M20 7h7v4l-2 1v3l-4 1v3l-4 1v3H9l3-5h2l1-4h3z" fill="#5a76ad" stroke="#132b66" />
        <path d="M6 1h11v9h-3V7H9L7 10H1l1-2h4l1-2H3l1-2h4l1-1H5z" fill="#d5202a" />
        <path d="M12 27h12" stroke="#ccd" strokeWidth="1.500" />
    </svg>
);

const OmicronIcon = () => (
    <svg width="28" height="28" viewBox="0 0 28 28">
        <rect width="28" height="28" rx="2" fill="#2f7fe6" />
        <path d="M28 0v26q0 2-2 2H0z" fill="#b5161d" />
        <path d="M0 28L28 0" stroke="#f2d169" strokeWidth="1.500" />
    </svg>
);

const ExcelIcon = () => (
    <svg width="30" height="30" viewBox="0 0 30 30">
        <path d="M6 1h19v22H1V6z" fill="#e3f2dc" stroke="#5ba04a" strokeWidth="1.400" />
        <path d="M4 6h17v12H4z" fill="#cfe6c5" />
        <path d="M18 8l11 1-1 19-23-3v-6h13z" fill="#fff" stroke="#6aa95b" />
        <path d="M21 11h6v3h-6zM20 16h6v3h-6zM20 21h6v4h-6zM13 20h5v4h-5zM7 20h4v3H7z" fill="#6fb35b" />
        <path d="M8 7l9 11M17 7L8 18" stroke="#1f6b2c" strokeWidth="3" />
    </svg>
);

const ShieldIcon = () => (
    <svg width="26" height="30" viewBox="0 0 26 30">
        <path d="M13 1q5 3 11 3 2 17-11 25Q0 21 2 4q6 0 11-3z" fill="#f8d64e" stroke="#6c7a8a" strokeWidth="1.500" />
        <path d="M13 2.500V15H3Q2 10 3 5q5 0 10-2.500zM13 15h10q-2 8-10 12.500z" fill="#2e6cae" />
    </svg>
);

const taskButton = 'flex h-full w-14 shrink-0 items-center justify-center rounded-t-sm border border-b-0 border-[#56708f] bg-gradient-to-br from-[#dde7f4] to-[#a9bedb] shadow-[inset_1px_1px_0_#f0f5fb]';
const pinnedButton = 'flex h-full w-[59px] shrink-0 items-center justify-center';

const Taskbar: React.FC = () => (
    <footer className="flex h-[35px] shrink-0 items-stretch overflow-hidden border-t border-[#5f738f] bg-[#a7bddc]">
        <div className="flex w-[71px] shrink-0 items-center gap-[11px] bg-[#8599b3] pl-2">
            <button type="button" aria-label="Start"><StartOrb /></button>
            <Grip />
        </div>
        <button type="button" aria-label="Explorer" className="mr-[9px] flex h-full w-12 shrink-0 items-center justify-center rounded-t-sm border border-b-0 border-[#56708f] bg-gradient-to-br from-[#e4ecf6] to-[#b8c9e0] shadow-[3px_0_0_#b9cbe4,4px_0_0_#6a82a4,7px_0_0_#b9cbe4,8px_0_0_#6a82a4]"><ExplorerIcon /></button>
        <button type="button" aria-label="CorelDRAW" className={pinnedButton}><CorelIcon /></button>
        <button type="button" aria-label="SolidWorks 2017" className={pinnedButton}><SolidWorksIcon /></button>
        <button type="button" aria-label="Chrome" className={taskButton}><ChromeIcon /></button>
        <button type="button" aria-label="Firefox" className={pinnedButton}><FirefoxIcon /></button>
        <button type="button" aria-label="Recorder" className={pinnedButton}><RecorderIcon /></button>
        <div className="ml-0.5 flex gap-0.5">
            <button type="button" aria-label="AutoCAD" className={taskButton}><AutocadIcon /></button>
            <button type="button" aria-label="Test Universe" className={taskButton}><OmicronIcon /></button>
            <button type="button" aria-label="Excel" className={taskButton}><ExcelIcon /></button>
            <button type="button" aria-label="Security" className="flex h-full w-14 shrink-0 items-center justify-center rounded-t-sm border border-b-0 border-[#8a7a40] bg-gradient-to-br from-[#fbf0a8] to-[#f0c955]"><ShieldIcon /></button>
            <button type="button" aria-label="QuickCMC" className={taskButton}><AppLogo size={28} /></button>
        </div>
        <div className="ml-auto flex w-[270px] shrink-0 items-center bg-gradient-to-r from-[#a7bddc] via-[#7f90a8] via-10% to-[#7f90a8] text-white">
            <span className="ml-[35px]"><Grip /></span>
            <span className="ml-0.5 w-7 text-center text-[12px]">TR</span>
            <svg className="ml-2" width="8" height="5" viewBox="0 0 8 5"><path d="M4 0l4 5H0z" fill="#fff" /></svg>
            <svg className="ml-3" width="16" height="16" viewBox="0 0 16 16"><path d="M2 1v14" stroke="#fff" strokeWidth="2" /><path d="M3 2h6v2h6l-2 3 1 3H8V8H3z" fill="#fff" stroke="#4d5a6c" strokeWidth="0.600" /></svg>
            <svg className="ml-1.5" width="16" height="14" viewBox="0 0 16 14"><path d="M0 11h2v3H0zM3 9h2v5H3zM6 6h2v8H6zM9 3h2v11H9zM12 0h3v14h-3z" fill="#fff" stroke="#4d5a6c" strokeWidth="0.500" /></svg>
            <svg className="ml-2" width="14" height="16" viewBox="0 0 14 16" fill="none" stroke="#fff" strokeWidth="1.600"><path d="M7 14.500H1.500v-12h8V4M4 1h3" /><path d="M9 3v4M12 3v4M7 7h7v3l-2 2H9L7 10zM10.500 12v3" /></svg>
            <svg className="ml-2" width="16" height="14" viewBox="0 0 16 14"><path d="M1 5h2l4-4v12L3 9H1z" fill="#fff" /><path d="M9 4q2 3 0 6M11 2q4 5 0 10" fill="none" stroke="#fff" strokeWidth="1.300" /></svg>
            <div className="mx-auto flex flex-col items-center text-[11px] leading-4">
                <span>16:54</span>
                <span>08.01.2019</span>
            </div>
            <button type="button" aria-label="Show desktop" className="h-full w-2 border-l border-[#4a5970] bg-[#5a6a81]" />
        </div>
    </footer>
);

const App: React.FC = () => (
    <div className={`relative flex h-screen flex-col overflow-hidden bg-[#555e70] ${BASE_FONT}`}>
        <Header />
        <Ribbon />
        <main className="grid min-h-0 flex-1 grid-cols-[772fr_504fr] gap-1 border-t border-[#3f4756] pt-[5px]">
            <TestView />
            <ImpedanceView />
        </main>
        <BottomTabs />
        <StatusBar />
        <Taskbar />

        {/* Mouse pointer and channel logo float over the windows */}
        <svg className="pointer-events-none absolute left-[62px] top-[371px]" width="12" height="19" viewBox="0 0 12 19">
            <path d="M.5.5v15l3.500-3 2.500 5.500 2-1-2.500-5.500h5z" fill="#fff" stroke="#222" />
        </svg>
        <svg className="pointer-events-none absolute bottom-[49px] right-[13px]" width="96" height="68" viewBox="0 0 96 68">
            <path d="M0 0h96v68H0z" fill="#5c5c5c" fillOpacity="0.550" />
            <g fill="#ef5350" fillOpacity="0.750">
                <path d="M1 52L47 3h10l6 24-8 2-5-13-30 33h21l-4 5H1z" />
                <path d="M47 46h20l-6 12H49l-8 8h-6l18-15h-7zM54 53h4l2-3h-4z" />
                <path d="M69 54l16-18 9 13-6 1-4-6-9 10z" />
            </g>
        </svg>
    </div>
);

export default App;
